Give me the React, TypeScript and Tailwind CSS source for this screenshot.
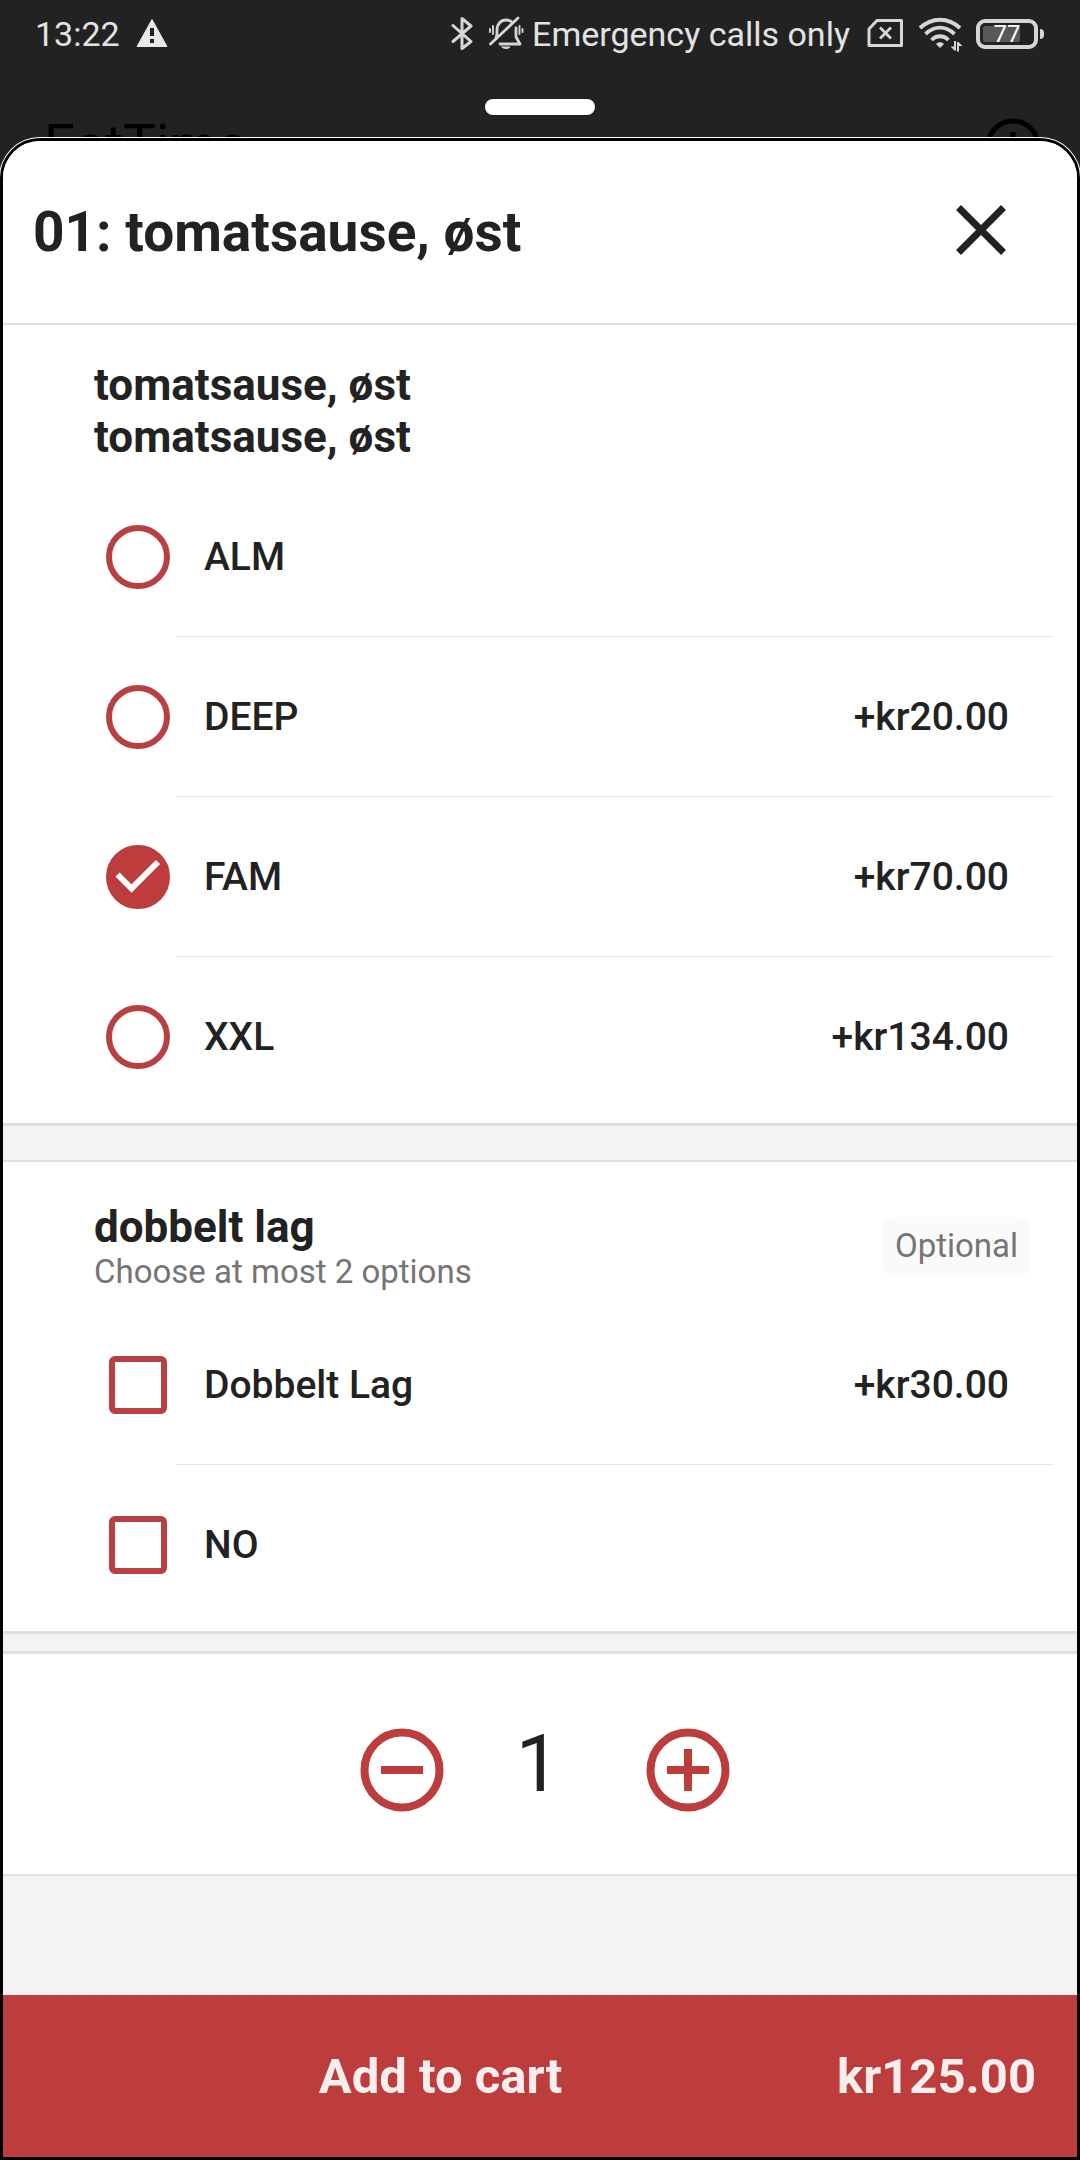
import { useState } from "react";

type Option = { id: string; label: string; price?: string };

const sizes: Option[] = [
  { id: "alm", label: "ALM" },
  { id: "deep", label: "DEEP", price: "+kr20.00" },
  { id: "fam", label: "FAM", price: "+kr70.00" },
  { id: "xxl", label: "XXL", price: "+kr134.00" },
];

const extras: Option[] = [
  { id: "dobbelt", label: "Dobbelt Lag", price: "+kr30.00" },
  { id: "no", label: "NO" },
];

function StatusBar() {
  return (
    <div className="flex h-[68px] items-center justify-between pl-[35px] pr-9 text-[#e2e2e2]">
      <div className="flex items-center gap-4">
        <span className="text-[34px] leading-10">13:22</span>
        <svg width="32" height="30" viewBox="0 0 32 30" aria-hidden="true">
          <path d="M16 .5 31 27.5H1Z" fill="#e8e8e8" stroke="#e8e8e8" strokeWidth="1" strokeLinejoin="round" />
          <path d="M14 9h4v8h-4zM14 20h4v4h-4z" fill="#222222" />
        </svg>
      </div>
      <div className="flex items-center">
        <svg className="mr-[15px]" width="22" height="36" viewBox="0 0 22 36" fill="none" stroke="#d6d6d6" strokeWidth="3" strokeLinejoin="round" strokeLinecap="round" aria-hidden="true">
          <path d="M2 9.500 20 25.500 11 32.500V2.500l9 7.500L2 25.500" />
        </svg>
        <svg className="mr-2" width="36" height="36" viewBox="0 0 36 36" fill="none" stroke="#d6d6d6" strokeWidth="2.800" strokeLinecap="round" aria-hidden="true">
          <path d="M8 22c1-2 1-5 1-8 0-6 4-10 9-10 3 0 5 1 6.500 2.500M28 12v9l4 7H12M2.500 28 30 2" strokeLinejoin="round" />
          <path d="M2 13v3M5 10v8M34.500 13v3M31.500 10v8" strokeWidth="1.900" />
          <path d="M14 31h8c-1 2-7 2-8 0Z" fill="#d6d6d6" strokeWidth="1" />
        </svg>
        <span className="text-[34px] leading-10">Emergency calls only</span>
        <svg className="ml-[17px]" width="37" height="30" viewBox="0 0 37 30" fill="none" stroke="#d6d6d6" strokeWidth="3" strokeLinejoin="round" aria-hidden="true">
          <path d="M10 1.500H34.500V26.500H2V10Z" />
          <path d="m13 8.500 11 11m0-11-11 11" strokeWidth="2.800" />
        </svg>
        <svg className="ml-[14px]" width="44" height="36" viewBox="0 0 44 36" fill="none" stroke="#d6d6d6" strokeWidth="3.800" aria-hidden="true">
          <path d="M2 12c12-11 28-11 40 0M7.500 18c9-8.500 20-8.500 29 0M13.500 24c5-5 12-5 17 0" />
          <path d="m22 32-4-4c2-2.500 6-2.500 8 0Z" fill="#d6d6d6" stroke="none" />
          <path d="M37 25v9.500M40 35.500V26" strokeWidth="2" />
          <path d="m36.500 34.500-4-4h4zM40.500 26l4 4h-4z" fill="#d6d6d6" stroke="none" />
        </svg>
        <div className="ml-3.5 flex items-center gap-0.5">
          <div className="relative flex h-[30px] w-[62px] items-center justify-center rounded-[9px] border-4 border-[#d6d6d6] text-[24px] leading-none text-white">
            <div className="absolute left-[3px] h-4 w-[37px] rounded-xs bg-[#585858]" />
            <span className="relative">77</span>
          </div>
          <div className="h-2.5 w-1 rounded-r-sm bg-[#d6d6d6]" />
        </div>
      </div>
    </div>
  );
}

function OptionRow({
  option,
  kind,
  checked,
  last,
  onChange,
}: {
  option: Option;
  kind: "radio" | "checkbox";
  checked: boolean;
  last: boolean;
  onChange: () => void;
}) {
  return (
    <label htmlFor={option.id} className="flex h-40 items-stretch">
      <span className="relative flex w-[70px] shrink-0 items-center">
        <input
          id={option.id}
          type={kind}
          name={kind === "radio" ? "size" : option.id}
          checked={checked}
          onChange={onChange}
          className={
            kind === "radio"
              ? "size-16 appearance-none rounded-full border-6 border-[#b83f42] bg-white checked:border-[#bd3c3c] checked:bg-[#bd3c3c]"
              : "ml-[3px] size-[58px] appearance-none rounded-md border-6 border-[#b83f42] bg-white checked:bg-[#bd3c3c]"
          }
        />
        {checked && (
          <svg className="pointer-events-none absolute left-0 size-16" viewBox="0 0 64 64" fill="none" stroke="#fff" strokeWidth="6" aria-hidden="true">
            <path d="m11.500 29.500 14 14L52 17" />
          </svg>
        )}
      </span>
      <span
        className={
          "flex flex-1 items-center justify-between pl-7 pr-11 text-[39px] font-medium leading-[46px] " +
          (last ? "" : "border-b border-[#e4e4e4]")
        }
      >
        <span>{option.label}</span>
        <span>{option.price}</span>
      </span>
    </label>
  );
}

export default function App() {
  const [size, setSize] = useState("fam");
  const [picked, setPicked] = useState<string[]>([]);
  const [count, setCount] = useState(1);

  const toggle = (id: string) =>
    setPicked((p) => (p.includes(id) ? p.filter((x) => x !== id) : [...p, id]));

  return (
    <div className="flex min-h-screen flex-col overflow-hidden bg-[#222222] font-[Roboto,sans-serif] text-[#222222]">
      <StatusBar />
      <div className="relative h-[70px] pt-[31px]">
        <div className="absolute inset-x-0 top-[45px] flex items-start justify-between pl-11 pr-[39px] text-black">
          <span className="text-[55px] leading-[64px]">EatTime</span>
          <svg className="mt-[5px]" width="56" height="56" viewBox="0 0 56 56" fill="none" stroke="#000" strokeWidth="5" aria-hidden="true">
            <circle cx="28" cy="28" r="25" />
            <path d="M28 14v5M28 25v17" />
          </svg>
        </div>
        <div className="relative mx-auto h-4 w-[110px] rounded-full bg-white" />
      </div>

      <main className="relative flex flex-1 flex-col overflow-hidden rounded-t-[40px] border-3 border-black bg-[#f3f3f3] ring-1 ring-white">
        <header className="flex h-[184px] items-center justify-between border-b-2 border-[#e0e0e0] bg-white pl-[30px] pr-[71px]">
          <h1 className="text-[55px] font-bold leading-[66px]">01: tomatsause, øst</h1>
          <button type="button" aria-label="Close" className="-mt-1">
            <svg width="50" height="50" viewBox="0 0 50 50" fill="none" stroke="#222" strokeWidth="7" aria-hidden="true">
              <path d="m2.500 2.500 45 45M47.500 2.500l-45 45" />
            </svg>
          </button>
        </header>

        <section className="border-b-3 border-[#dfdfdf] bg-white pb-1.5 pt-[34px]">
          <h2 className="mb-3.5 pl-[91px] text-[44px] font-bold leading-[52px]">
            tomatsause, øst
            <br />
            tomatsause, øst
          </h2>
          <div role="radiogroup" aria-label="Size" className="pl-[103px] pr-6">
            {sizes.map((o, i) => (
              <OptionRow
                key={o.id}
                option={o}
                kind="radio"
                checked={size === o.id}
                last={i === sizes.length - 1}
                onChange={() => setSize(o.id)}
              />
            ))}
          </div>
        </section>

        <section className="mt-[34px] border-b-3 border-t-2 border-[#dfdfdf] bg-white pb-1.5 pt-[39px]">
          <div className="mb-3.5 flex items-center justify-between pl-[91px] pr-[47px]">
            <div>
              <h2 className="text-[44px] font-bold leading-[52px]">dobbelt lag</h2>
              <p className="text-[33px] leading-[38px] text-[#757575]">Choose at most 2 options</p>
            </div>
            <span className="rounded-lg bg-[#fafafa] px-3 py-2.5 text-[33px] leading-[38px] text-[#757575]">
              Optional
            </span>
          </div>
          <div className="pl-[103px] pr-6">
            {extras.map((o, i) => (
              <OptionRow
                key={o.id}
                option={o}
                kind="checkbox"
                checked={picked.includes(o.id)}
                last={i === extras.length - 1}
                onChange={() => toggle(o.id)}
              />
            ))}
          </div>
        </section>

        <section className="mt-[17px] flex h-[225px] items-center justify-center border-b-2 border-t-3 border-[#dfdfdf] bg-white pl-2.5 pt-3">
          <button type="button" aria-label="Decrease quantity" onClick={() => setCount((c) => Math.max(1, c - 1))}>
            <svg width="84" height="84" viewBox="0 0 84 84" fill="none" stroke="#bd3c3c" strokeWidth="8" aria-hidden="true">
              <circle cx="42" cy="42" r="37.500" />
              <path d="M21 42h42" />
            </svg>
          </button>
          <output className="w-[202px] pb-3 pr-3.5 text-center text-[79px] leading-[92px]">{count}</output>
          <button type="button" aria-label="Increase quantity" onClick={() => setCount((c) => c + 1)}>
            <svg width="84" height="84" viewBox="0 0 84 84" fill="none" stroke="#bd3c3c" strokeWidth="8" aria-hidden="true">
              <circle cx="42" cy="42" r="37.500" />
              <path d="M21 42h42M42 21v42" />
            </svg>
          </button>
        </section>

        <button
          type="button"
          className="mt-auto flex h-[162px] items-center bg-[#bd3c3c] px-[41px] pt-0.5 text-[49px] font-bold leading-[58px] text-[#f8eeee]"
        >
          <span className="flex-1 text-center">Add to cart</span>
          <span>kr125.00</span>
        </button>
      </main>
    </div>
  );
}
